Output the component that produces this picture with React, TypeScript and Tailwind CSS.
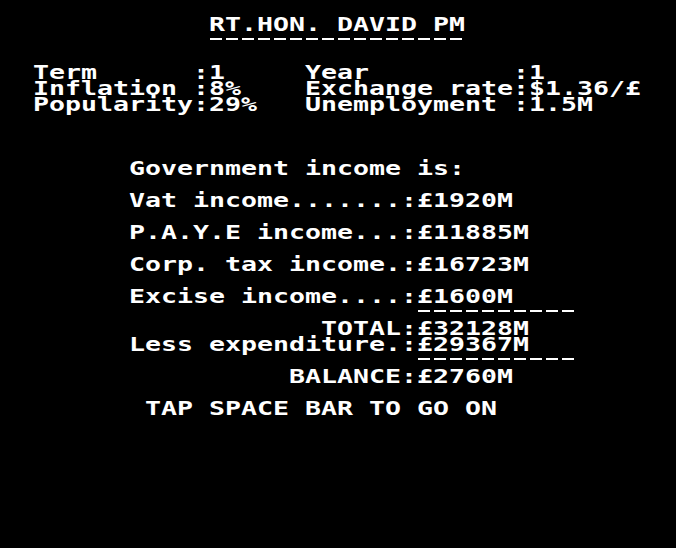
import React from 'react'

// BBC Micro style text screen: 16x16 px character cells
type Line = string | { dashes: number; col: number }

const lines: Line[] = [
  '',
  '             RT.HON. DAVID PM',
  { dashes: 16, col: 13 },
  '',
  '  Term      :1     Year         :1',
  '  Inflation :8%    Exchange rate:$1.36/£',
  '  Popularity:29%   Unemployment :1.5M',
  '',
  '',
  '',
  '        Government income is:',
  '',
  '        Vat income.......:£1920M',
  '',
  '        P.A.Y.E income...:£11885M',
  '',
  '        Corp. tax income.:£16723M',
  '',
  '        Excise income....:£1600M',
  { dashes: 10, col: 26 },
  '                    TOTAL:£32128M',
  '        Less expenditure.:£29367M',
  { dashes: 10, col: 26 },
  '                  BALANCE:£2760M',
  '',
  '         TAP SPACE BAR TO GO ON',
]

function DashRow({ count, col }: { count: number; col: number }) {
  return (
    <div className="h-4 flex gap-1 pt-[6px]" style={{ paddingLeft: col * 16 + 1 }}>
      {Array.from({ length: count }).map((_, i) => (
        <div key={i} className="w-3 h-[2px] bg-white" />
      ))}
    </div>
  )
}

function App() {
  return (
    <div className="w-[676px] h-[548px] bg-black overflow-hidden pl-[1px]">
      <div
        className="text-white font-bold text-[19px] leading-4"
        style={{ fontFamily: '"DejaVu Sans Mono", "Liberation Mono", monospace' }}
      >
        {lines.map((line, i) =>
          typeof line === 'string' ? (
            <div key={i} className="h-4 whitespace-pre origin-left scale-x-[1.3987]">
              {line}
            </div>
          ) : (
            <DashRow key={i} count={line.dashes} col={line.col} />
          )
        )}
      </div>
    </div>
  )
}

export default App
